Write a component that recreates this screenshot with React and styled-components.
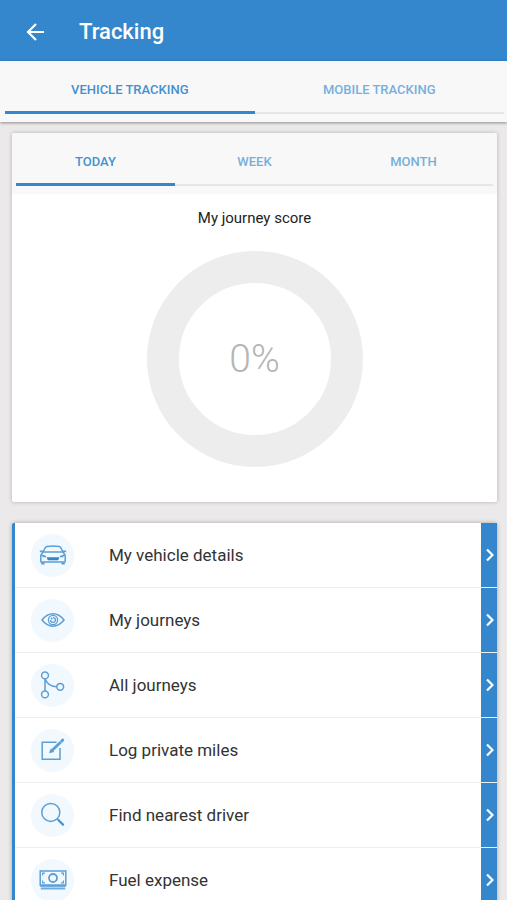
import React, { useState } from 'react';
import styled, { createGlobalStyle, ThemeProvider } from 'styled-components';

const theme = {
  colors: {
    blue: '#3487cd',
    link: '#4391d1',
    linkMuted: '#76afde',
    page: '#ebe9ea',
    bar: '#f8f8f8',
    track: '#e6e6e6',
    ring: '#ededed',
    badge: '#f1f8fe',
    line: '#efefef',
    text: '#333',
  },
};

const GlobalStyle = createGlobalStyle`
  * {
    box-sizing: border-box;
  }

  body {
    margin: 0;
    font-family: Roboto, 'Liberation Sans', sans-serif;
    background: #ebe9ea;
  }

  button {
    padding: 0;
    border: none;
    background: none;
    font-family: inherit;
    cursor: pointer;
  }
`;

const Page = styled.div`
  display: flex;
  flex-direction: column;
  height: 100vh;
  background: ${({ theme }) => theme.colors.page};
`;

const Header = styled.header`
  display: flex;
  align-items: center;
  gap: 32px;
  flex: none;
  height: 61px;
  padding: 2px 24px 0;
  background: ${({ theme }) => theme.colors.blue};
  color: white;
`;

const BackButton = styled.button`
  display: flex;
  color: inherit;
`;

const Title = styled.h1`
  margin: 0;
  font-size: 22px;
  font-weight: 500;
  line-height: 28px;
`;

const TabBar = styled.div`
  display: flex;
  flex: none;
  height: 61px;
  padding: 0 4px 8px;
  background: ${({ theme }) => theme.colors.bar};
`;

const TopTabs = styled(TabBar)`
  position: relative;
  z-index: 1;
  padding: 0 3px 8px 5px;
  box-shadow: 0 1px 3px rgba(0, 0, 0, 0.4);
`;

const Tab = styled.button`
  flex: 1;
  padding-top: 5px;
  font-size: 13px;
  font-weight: 500;
  line-height: 16px;
  color: ${({ theme, $active }) => ($active ? theme.colors.link : theme.colors.linkMuted)};
  box-shadow: ${({ theme, $active }) =>
    $active
      ? `inset 0 -3px ${theme.colors.blue}`
      : `inset 0 -2px ${theme.colors.track}`};
`;

const Content = styled.main`
  display: flex;
  flex-direction: column;
  flex: 1;
  gap: 21px;
  min-height: 0;
  padding: 11px 10px 16px 12px;
  overflow-y: auto;
  scrollbar-width: none;
`;

const Card = styled.section`
  flex: none;
  border-radius: 2px;
  background: white;
  box-shadow: 0 0 4px rgba(0, 0, 0, 0.24);
  overflow: hidden;
`;

const Score = styled.div`
  display: flex;
  flex-direction: column;
  align-items: center;
  gap: 23px;
  padding: 14px 0 35px;
`;

const ScoreTitle = styled.h2`
  margin: 0;
  font-size: 15px;
  font-weight: 400;
  line-height: 20px;
  color: #222;
`;

const Ring = styled.div`
  display: flex;
  align-items: center;
  justify-content: center;
  width: 216px;
  height: 216px;
  border: 32px solid ${({ theme }) => theme.colors.ring};
  border-radius: 50%;
  font-size: 39px;
  font-weight: 300;
  color: #b5b5b5;
`;

const Menu = styled.ul`
  flex: none;
  margin: 0;
  padding: 0;
  list-style: none;
  border-left: 3px solid ${({ theme }) => theme.colors.blue};
  border-radius: 2px;
  background: white;
  box-shadow: 0 0 4px rgba(0, 0, 0, 0.3);
`;

const MenuItem = styled.li`
  border-bottom: 1px solid ${({ theme }) => theme.colors.line};
`;

const MenuLink = styled.a`
  display: flex;
  align-items: center;
  height: 64px;
  padding-left: 16px;
  color: ${({ theme }) => theme.colors.text};
  text-decoration: none;
`;

const Badge = styled.span`
  display: flex;
  align-items: center;
  justify-content: center;
  width: 43px;
  height: 43px;
  border-radius: 50%;
  background: ${({ theme }) => theme.colors.badge};
  color: #5b9fd6;
`;

const Label = styled.span`
  flex: 1;
  padding-left: 35px;
  font-size: 17px;
  line-height: 24px;
`;

const Arrow = styled.span`
  display: flex;
  align-items: center;
  justify-content: center;
  align-self: stretch;
  width: 16px;
  background: ${({ theme }) => theme.colors.blue};
  color: white;
`;

const Icon = ({ children }) => (
  <svg width="30" height="30" viewBox="0 0 30 30" fill="none" stroke="currentColor" strokeWidth="1.5" aria-hidden="true">
    {children}
  </svg>
);

const CarIcon = () => (
  <Icon>
    <path d="M5 12 7.4 7.4Q7.8 6.5 9 6.4Q15 5.8 21 6.4Q22.2 6.5 22.6 7.4L25 12" />
    <path d="M5 12H25L27.2 15.2V21.4Q27.2 22 26.6 22H3.4Q2.8 22 2.8 21.4V15.2Z" />
    <path d="M5 11.4H1.8M25 11.4H28.2" strokeWidth="1.8" />
    <path d="M3.2 23.4H6.6M23.4 23.4H26.8" strokeWidth="2.2" />
    <path d="M3.4 15 8 16.6H4.4M26.6 15 22 16.6H25.6" />
    <path d="M9 17.6H21L20 20H10Z" fill="#3487cd" stroke="#3487cd" strokeWidth="0.6" />
  </Icon>
);

const EyeIcon = () => (
  <Icon>
    <path d="M4 15Q9 8.8 15 8.8T26 15Q21 21.2 15 21.2T4 15Z" />
    <circle cx="15" cy="15" r="4.6" strokeWidth="1.3" />
    <path d="M15 12.6A2.4 2.4 0 1 1 12.6 15" strokeWidth="1.3" />
    <circle cx="13.6" cy="13.6" r="1" fill="currentColor" stroke="none" />
  </Icon>
);

const BranchIcon = () => (
  <Icon>
    <circle cx="7" cy="5.4" r="3.4" />
    <circle cx="7" cy="24.4" r="3.4" />
    <circle cx="22.2" cy="16.8" r="3.4" />
    <path d="M7 8.8V21M7 8.8C9 13.5 12.5 16.8 18.8 16.8" />
  </Icon>
);

const EditIcon = () => (
  <Icon>
    <path d="M18.6 7.2H4.2V24.2H22V13" />
    <path d="M14 15.4 22.6 7.2" strokeWidth="2.8" />
    <path d="M12.2 17.2 13 14.8 14.8 16.6Z" fill="currentColor" />
    <path d="M23.6 6.2 24.8 5" strokeWidth="2.8" strokeLinecap="round" />
  </Icon>
);

const SearchIcon = () => (
  <Icon>
    <circle cx="12.8" cy="12.4" r="9" />
    <path d="M19.2 18.8 21.2 20.8" />
    <path d="M20.6 20.2 25 24.6" stroke="#4391d1" strokeWidth="2.2" strokeLinecap="round" />
  </Icon>
);

const MoneyIcon = () => (
  <Icon>
    <rect x="2.2" y="6" width="25.6" height="14" />
    <circle cx="15" cy="13" r="4" strokeWidth="1.8" />
    <path d="M4.6 10.4V8.2H7M23 8.2H25.4V10.4M4.6 15.6V17.8H7M23 17.8H25.4V15.6" strokeWidth="1.2" />
    <path d="M2.2 20H27.8V22H2.2ZM2.8 22.4H27.2V24.6H2.8Z" fill="currentColor" stroke="none" opacity="0.85" />
  </Icon>
);

const trackingTabs = ['VEHICLE TRACKING', 'MOBILE TRACKING'];
const periodTabs = ['TODAY', 'WEEK', 'MONTH'];

const menuItems = [
  { label: 'My vehicle details', icon: CarIcon },
  { label: 'My journeys', icon: EyeIcon },
  { label: 'All journeys', icon: BranchIcon },
  { label: 'Log private miles', icon: EditIcon },
  { label: 'Find nearest driver', icon: SearchIcon },
  { label: 'Fuel expense', icon: MoneyIcon },
];

const Tabs = ({ as: Bar = TabBar, label, items }) => {
  const [active, setActive] = useState(items[0]);

  return (
    <Bar role="tablist" aria-label={label}>
      {items.map((item) => (
        <Tab
          key={item}
          type="button"
          role="tab"
          aria-selected={item === active}
          $active={item === active}
          onClick={() => setActive(item)}
        >
          {item}
        </Tab>
      ))}
    </Bar>
  );
};

const App = () => (
  <ThemeProvider theme={theme}>
    <GlobalStyle />
    <Page>
      <Header>
        <BackButton type="button" aria-label="Back">
          <svg width="23" height="24" viewBox="0 0 23 24" fill="none" stroke="currentColor" strokeWidth="2.2">
            <path d="M20 12H4.5M12 4 4 12 12 20" />
          </svg>
        </BackButton>
        <Title>Tracking</Title>
      </Header>
      <Tabs as={TopTabs} label="Tracking type" items={trackingTabs} />

      <Content>
        <Card>
          <Tabs label="Period" items={periodTabs} />
          <Score>
            <ScoreTitle>My journey score</ScoreTitle>
            <Ring>0%</Ring>
          </Score>
        </Card>

        <Menu>
          {menuItems.map(({ label, icon: ItemIcon }) => (
            <MenuItem key={label}>
              <MenuLink href="#">
                <Badge>
                  <ItemIcon />
                </Badge>
                <Label>{label}</Label>
                <Arrow>
                  <svg width="10" height="14" viewBox="0 0 10 14" fill="none" stroke="currentColor" strokeWidth="2.2">
                    <path d="M3 1.5 8.5 7 3 12.5" />
                  </svg>
                </Arrow>
              </MenuLink>
            </MenuItem>
          ))}
        </Menu>
      </Content>
    </Page>
  </ThemeProvider>
);

export default App;
